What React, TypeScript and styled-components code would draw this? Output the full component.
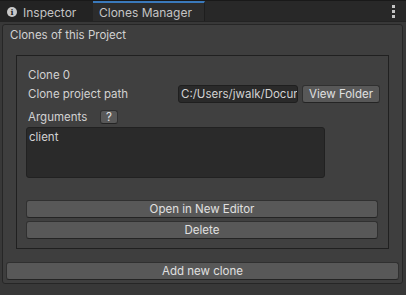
import React from "react";
import styled, { createGlobalStyle } from "styled-components";

const Global = createGlobalStyle`
  html, body { margin: 0; padding: 0; background: #383838; }
  body { font-family: Inter, "Noto Sans", "Liberation Sans", sans-serif; font-size: 11.5px; color: #d2d2d2; }
  * { box-sizing: border-box; }
`;

const Window = styled.div`
  width: 406px;
  height: 295px;
  display: flex;
  flex-direction: column;
  background: #383838;
  overflow: hidden;
`;

const TabBar = styled.div`
  height: 22px;
  flex: none;
  display: flex;
  align-items: stretch;
  background: #282828;
  border-top: 1px solid #191919;
  border-bottom: 1px solid #232323;
`;

const Tab = styled.div<{ $active?: boolean; $w: number }>`
  width: ${(p) => p.$w}px;
  display: flex;
  align-items: center;
  gap: 6px;
  padding-left: ${(p) => (p.$active ? "6px" : "7px")};
  background: ${(p) => (p.$active ? "#2c2c2c" : "#232323")};
  border-top: 2px solid ${(p) => (p.$active ? "#3a79bb" : "transparent")};
  border-right: 1px solid ${(p) => (p.$active ? "#1e1e1e" : "transparent")};
  color: #c4c4c4;
  font-size: 12px;
  white-space: nowrap;
`;

const InfoIcon = styled.span`
  width: 10px;
  height: 10px;
  border-radius: 50%;
  background: #c8c8c8;
  color: #232323;
  font-size: 8px;
  font-weight: 700;
  display: inline-flex;
  align-items: center;
  justify-content: center;
  line-height: 1;
  font-family: "DejaVu Serif", serif;
`;

const Spacer = styled.div`
  flex: 1;
`;

const MenuDots = styled.div`
  width: 14px;
  display: flex;
  flex-direction: column;
  align-items: center;
  justify-content: center;
  gap: 2px;
  margin-right: 6px;
  span {
    width: 3px;
    height: 3px;
    background: #c4c4c4;
  }
`;

const Content = styled.div`
  flex: 1;
  padding: 2px 3px 0 2px;
`;

const OuterBox = styled.div`
  border: 1px solid #262626;
  border-radius: 3px;
  background: #3e3e3e;
  padding: 0 3px 3px 3px;
`;

const Title = styled.div`
  height: 20px;
  display: flex;
  align-items: center;
  padding-left: 4px;
  color: #d2d2d2;
  margin-bottom: 10px;
`;

const InnerBox = styled.div`
  margin: 0 10px 13px 10px;
  border: 1px solid #202020;
  background: #404040;
  padding: 10px 10px 9px 9px;
  display: flex;
  flex-direction: column;
`;

const Row = styled.div<{ $h: number; $mb?: number }>`
  height: ${(p) => p.$h}px;
  margin-bottom: ${(p) => p.$mb ?? 0}px;
  display: flex;
  align-items: center;
`;

const Label = styled.div<{ $w?: number }>`
  padding-left: 2px;
  width: ${(p) => (p.$w ? `${p.$w}px` : "auto")};
  color: #d2d2d2;
  white-space: nowrap;
  flex: none;
`;

const PathField = styled.div`
  width: 120px;
  height: 18px;
  background: #2a2a2a;
  border: 1px solid #1f1f1f;
  border-radius: 3px;
  color: #d2d2d2;
  padding-left: 2px;
  display: flex;
  align-items: center;
  overflow: hidden;
  white-space: nowrap;
  margin-right: 4px;
  flex: none;
`;

const Button = styled.div<{ $w?: number; $h?: number }>`
  height: ${(p) => p.$h ?? 18}px;
  ${(p) => (p.$w ? `width: ${p.$w}px;` : "")}
  background: #585858;
  border: 1px solid #303030;
  border-bottom-color: #242424;
  border-radius: 3px;
  color: #e0e0e0;
  display: flex;
  align-items: center;
  justify-content: center;
  white-space: nowrap;
  flex: none;
`;

const TextArea = styled.div`
  width: 299px;
  height: 51px;
  background: #2a2a2a;
  border: 1px solid #212121;
  border-radius: 3px;
  padding: 2px 2px;
  color: #d2d2d2;
  margin-bottom: 22px;
`;

const ButtonStack = styled.div`
  display: flex;
  flex-direction: column;
  gap: 3px;
`;

export default function App() {
  return (
    <Window>
      <Global />
      <TabBar>
        <Tab $w={93}>
          <InfoIcon>i</InfoIcon>
          Inspector
        </Tab>
        <Tab $active $w={112}>Clones Manager</Tab>
        <Spacer />
        <MenuDots>
          <span />
          <span />
          <span />
        </MenuDots>
      </TabBar>
      <Content>
        <OuterBox>
          <Title>Clones of this Project</Title>
          <InnerBox>
            <Row $h={18} $mb={1}>
              <Label>Clone 0</Label>
            </Row>
            <Row $h={18} $mb={6}>
              <Label $w={152}>Clone project path</Label>
              <PathField>C:/Users/jwalk/Documents</PathField>
              <Button $w={78}>View Folder</Button>
            </Row>
            <Row $h={16} $mb={2}>
              <Label $w={74}>Arguments</Label>
              <Button $w={18} $h={14}>?</Button>
            </Row>
            <TextArea>client</TextArea>
            <ButtonStack>
              <Button>Open in New Editor</Button>
              <Button>Delete</Button>
            </ButtonStack>
          </InnerBox>
          <Button>Add new clone</Button>
        </OuterBox>
      </Content>
    </Window>
  );
}
